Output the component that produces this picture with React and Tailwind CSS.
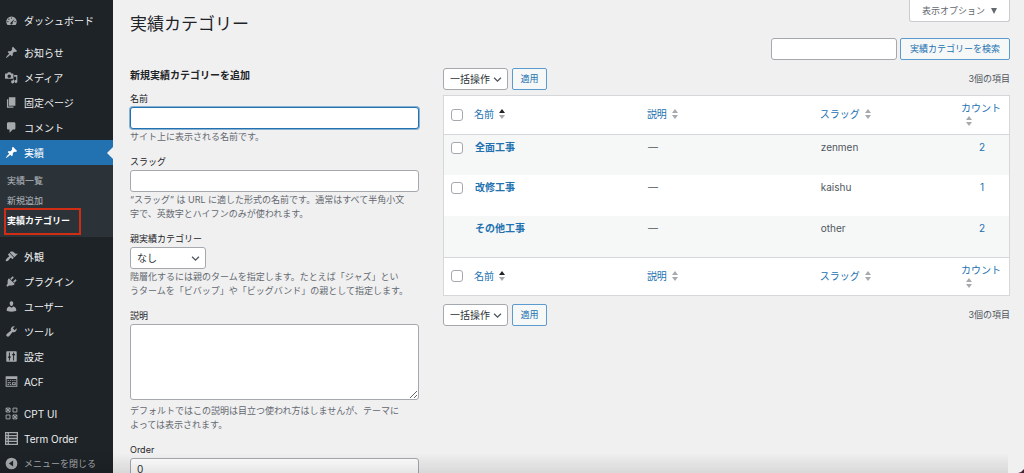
import React, { useState } from "react";

const icons = {
  dashboard: (
    <path
      fillRule="evenodd"
      d="M3.8 17h12.4c1.1-1.4 1.8-3.2 1.8-5.100a8 8 0 0 0-16 0c0 1.900.7 3.700 1.800 5.100zM10 5.200a1 1 0 1 1 0 2 1 1 0 0 1 0-2zM6 6.900a1 1 0 1 1 0 2 1 1 0 0 1 0-2zm8.800.3-3.200 6.300a1.800 1.800 0 1 1-2-.900zM4.500 10.600a1 1 0 1 1 0 2 1 1 0 0 1 0-2zm11 0a1 1 0 1 1 0 2 1 1 0 0 1 0-2z"
    />
  ),
  pin: (
    <path d="M10.440 3.020l1.820-1.820 6.360 6.350-1.830 1.820c-1.050-.680-2.480-.570-3.410.360l-.750.750c-.920.930-1.040 2.350-.350 3.410l-1.830 1.820-2.410-2.410-2.800 2.790c-.420.420-3.380 2.710-3.800 2.290s1.860-3.390 2.280-3.810l2.790-2.790L4.100 9.360l1.830-1.820c1.050.690 2.480.570 3.400-.360l.750-.750c.930-.920 1.050-2.350.360-3.410z" />
  ),
  media: (
    <>
      <path
        fillRule="evenodd"
        d="M1 4h2.500L4.500 2h4l1 2H12c.600 0 1 .400 1 1v6c0 .600-.400 1-1 1H1c-.600 0-1-.400-1-1V5c0-.600.400-1 1-1zm5.500 1.300a2.700 2.700 0 1 0 0 5.400 2.700 2.700 0 0 0 0-5.400z"
      />
      <path d="M14 6h5v10.200a2.300 2.300 0 1 1-1.800-2.200V9H14zM12.200 13.300V13H14v3.700a2.300 2.300 0 1 1-1.800-2.200z" />
    </>
  ),
  page: <path d="M6 15V2h10v13H6zm-1 1h8v2H3V5h2v11z" />,
  comment: (
    <path d="M5 2h9c1.100 0 2 .900 2 2v7c0 1.100-.900 2-2 2h-2l-5 5v-5H5c-1.100 0-2-.900-2-2V4c0-1.100.900-2 2-2z" />
  ),
  appearance: (
    <path d="M14.480 11.060L7.410 3.990l1.500-1.500c.500-.560 2.300-.470 3.510.320 1.210.800 1.430 1.280 2.910 2.100 1.180.640 2.450 1.260 4.450.850zm-.710.710L6.700 4.700 4.930 6.470c-.390.390-.390 1.020 0 1.410l1.060 1.060c.390.390.390 1.030 0 1.420-.600.600-1.430 1.110-2.210 1.690-.350.260-.700.530-1.010.840C1.430 14.230.400 16.080 1.400 17.070c.990 1 2.840-.030 4.180-1.360.310-.310.580-.660.850-1.020.570-.780 1.080-1.610 1.690-2.210.390-.390 1.020-.390 1.410 0l1.060 1.060c.390.390 1.020.390 1.410 0z" />
  ),
  plugin: (
    <path d="M13.110 4.360L9.870 7.600 8 5.730l3.240-3.240c.350-.340 1.050-.200 1.560.320.520.510.660 1.210.310 1.550zm-8 1.770l.910-1.120 9.010 9.010-1.190.840c-.710.710-2.630 1.160-3.820 1.160H6.140L4.900 17.260c-.590.590-1.540.590-2.120 0-.590-.580-.590-1.530 0-2.120l1.240-1.240v-3.880c0-1.130.400-3.190 1.090-3.890zm7.260 3.970l3.240-3.240c.340-.350 1.040-.210 1.550.310.520.510.660 1.210.310 1.550l-3.240 3.250z" />
  ),
  users: (
    <path d="M10 9.250c-2.270 0-2.730-3.440-2.730-3.440C7 4.020 7.820 2 9.970 2c2.160 0 2.980 2.020 2.710 3.810 0 0-.410 3.440-2.680 3.440zm0 2.570L12.720 10c2.390 0 4.520 2.330 4.520 4.530v2.490s-3.650 1.130-7.240 1.130c-3.650 0-7.240-1.130-7.240-1.130v-2.490c0-2.250 1.940-4.480 4.470-4.480z" />
  ),
  tools: (
    <path d="M16.680 9.770c-1.340 1.340-3.300 1.670-4.950.990l-5.410 6.520c-.990.990-2.590.990-3.580 0s-.990-2.590 0-3.570l6.520-5.420c-.680-1.650-.350-3.610.990-4.950 1.280-1.280 3.120-1.620 4.720-1.060l-2.890 2.890 2.820 2.820 2.860-2.870c.530 1.580.180 3.390-1.080 4.650z" />
  ),
  settings: (
    <path
      fillRule="evenodd"
      d="M3 2h14c.600 0 1 .400 1 1v14c0 .600-.400 1-1 1H3c-.600 0-1-.400-1-1V3c0-.600.400-1 1-1zm3 2v6H4.500v2H6v4h1.500v-4H9v-2H7.500V4zm6.500 0v2H11v2h1.500v8H14V8h1.500V6H14V4z"
    />
  ),
  acf: (
    <path
      fillRule="evenodd"
      d="M1 2h18v16H1zm1.500 4v10.500h15V6zM4 7.500h2v1.500H4zm3.500 0h2v1.500h-2zm3.500 0h2v1.500h-2zm3.500 0h2v1.500h-2zM4 11h5v1.500H4zm7 0h5.500v4.500H11zM4 14h2v1.500H4zm3.500 0h2v1.500h-2zm5-1.700v2H15v-2z"
    />
  ),
  cpt: (
    <g fill="none" stroke="currentColor" strokeWidth="1.400">
      <path d="M1.700 1.700h6v6h-6zM12.300 1.700h6v6h-6zM1.700 12.300h6v6h-6zM12.300 12.300h6v6h-6z" />
      <path d="M1.700 1.700l6 6M7.700 1.700l-6 6M12.300 12.300l6 6M18.300 12.300l-6 6" />
    </g>
  ),
  order: (
    <g fill="none" stroke="currentColor" strokeWidth="2">
      <path d="M1 1h18v18H1zM1 5.500h18M1 10h18M1 14.500h18M5 1v18" />
    </g>
  ),
  collapse: (
    <path
      fillRule="evenodd"
      d="M10 1a9 9 0 1 1 0 18 9 9 0 0 1 0-18zM12.500 5.500L6 10l6.500 4.500z"
    />
  ),
};

const menuGroups = [
  [{ label: "ダッシュボード", icon: "dashboard" }],
  [
    { label: "お知らせ", icon: "pin" },
    { label: "メディア", icon: "media" },
    { label: "固定ページ", icon: "page" },
    { label: "コメント", icon: "comment" },
    {
      label: "実績",
      icon: "pin",
      current: true,
      children: ["実績一覧", "新規追加", "実績カテゴリー"],
    },
  ],
  [
    { label: "外観", icon: "appearance" },
    { label: "プラグイン", icon: "plugin" },
    { label: "ユーザー", icon: "users" },
    { label: "ツール", icon: "tools" },
    { label: "設定", icon: "settings" },
    { label: "ACF", icon: "acf" },
  ],
  [
    { label: "CPT UI", icon: "cpt" },
    { label: "Term Order", icon: "order" },
  ],
];

const terms = [
  { name: "全面工事", slug: "zenmen", count: 2, selectable: true },
  { name: "改修工事", slug: "kaishu", count: 1, selectable: true },
  { name: "その他工事", slug: "other", count: 2, selectable: false },
];

const inputClass =
  "block h-[22px] w-full rounded-[3px] border border-[#a5a8ad] bg-white px-[6px] text-[10px] text-[#2c3338] outline-none focus:border-[#2271b1] focus:ring-1 focus:ring-[#2271b1]/50";

const buttonClass =
  "h-[22px] rounded-[2px] border border-[#5b9bd0] bg-[#f6f7f7] text-[9px] text-[#2271b1]";

const checkboxClass =
  "block size-3 appearance-none rounded-[3px] border border-[#a5a8ad] bg-white checked:bg-[#2271b1]";

const MenuIcon = ({ name }) => (
  <svg viewBox="0 0 20 20" className="size-[13px] shrink-0" fill="currentColor" aria-hidden="true">
    {icons[name]}
  </svg>
);

const MenuItem = ({ item }) => (
  <li>
    <a
      href="#"
      className={
        item.current
          ? "relative flex h-[25px] items-center gap-[6px] bg-[#2271b1] pl-[5px] text-white"
          : "flex h-[25px] items-center gap-[6px] pl-[5px] text-[#f0f0f1]"
      }
    >
      <span className={item.current ? "text-white" : "text-[#a7aaad]"}>
        <MenuIcon name={item.icon} />
      </span>
      {item.label}
      {item.current && (
        <span className="absolute top-1/2 right-0 size-0 -translate-y-1/2 border-y-[6px] border-r-[6px] border-y-transparent border-r-[#f0f0f1]" />
      )}
    </a>
    {item.children && (
      <ul className="bg-[#2c3338] py-[6px] text-[9px]">
        {item.children.map((child, index) => {
          const active = index === item.children.length - 1;
          return (
            <li key={child} className="relative">
              <a
                href="#"
                className={
                  active
                    ? "flex h-5 items-center pl-[7px] font-bold text-white"
                    : "flex h-5 items-center pl-[7px] text-[#b4b9be]"
                }
              >
                {child}
              </a>
              {active && (
                <span className="pointer-events-none absolute -top-[3px] left-1 h-[27px] w-[77px] border-2 border-[#d12d14]" />
              )}
            </li>
          );
        })}
      </ul>
    )}
  </li>
);

const Sidebar = () => (
  <nav className="w-[113px] shrink-0 bg-[#1d2327] pt-2 text-[10px] whitespace-nowrap">
    {menuGroups.map((group, index) => (
      <ul key={index} className="mb-[7px] last-of-type:mb-0">
        {group.map((item) => (
          <MenuItem key={item.label} item={item} />
        ))}
      </ul>
    ))}
    <button
      type="button"
      className="flex h-[25px] w-full items-center gap-[6px] pl-[5px] text-[9px] text-[#a7aaad]"
    >
      <MenuIcon name="collapse" />
      メニューを閉じる
    </button>
  </nav>
);

const Chevron = () => (
  <svg
    viewBox="0 0 10 10"
    className="pointer-events-none absolute top-[7px] right-[6px] size-[9px] text-[#50575e]"
    fill="none"
    stroke="currentColor"
    strokeWidth="1.500"
    aria-hidden="true"
  >
    <path d="M1.200 3L5 6.800 8.800 3" />
  </svg>
);

const SortArrows = ({ sorted }) => (
  <svg viewBox="0 0 6 12" className="ml-[5px] h-3 w-[6px]" aria-hidden="true">
    <path d="M3 1l3 4H0z" fill={sorted ? "#1d2327" : "#a7aaad"} />
    <path d="M3 11l3-4H0z" fill="#a7aaad" />
  </svg>
);

const Field = ({ id, label, help, children }) => (
  <div className="mb-[11px]">
    <label htmlFor={id} className="mb-px block w-fit text-[#1d2327]">
      {label}
    </label>
    {children}
    {help && <p className="mt-px whitespace-pre-line text-[#646970]">{help}</p>}
  </div>
);

const AddTermForm = () => (
  <form className="text-[9px] leading-[14px]" onSubmit={(e) => e.preventDefault()}>
    <h2 className="mb-[10px] text-[10px] font-bold text-[#1d2327]">新規実績カテゴリーを追加</h2>
    <Field id="tag-name" label="名前" help="サイト上に表示される名前です。">
      <input id="tag-name" type="text" autoFocus className={`${inputClass} caret-transparent`} />
    </Field>
    <Field
      id="tag-slug"
      label="スラッグ"
      help={
        "“スラッグ” は URL に適した形式の名前です。通常はすべて半角小文\n字で、英数字とハイフンのみが使われます。"
      }
    >
      <input id="tag-slug" type="text" className={inputClass} />
    </Field>
    <Field
      id="parent"
      label="親実績カテゴリー"
      help={
        "階層化するには親のタームを指定します。たとえば「ジャズ」とい\nうタームを「ビバップ」や「ビッグバンド」の親として指定します。"
      }
    >
      <div className="relative w-[76px]">
        <select id="parent" className={`${inputClass} appearance-none`}>
          <option>なし</option>
        </select>
        <Chevron />
      </div>
    </Field>
    <Field id="tag-description" label="説明">
      <textarea
        id="tag-description"
        className="block h-[76px] w-full rounded-[3px] border border-[#a5a8ad] bg-white outline-none"
      />
      <p className="mt-1 whitespace-pre-line text-[#646970]">
        {"デフォルトではこの説明は目立つ使われ方はしませんが、テーマに\nよっては表示されます。"}
      </p>
    </Field>
    <Field id="tag-order" label="Order">
      <input id="tag-order" type="text" defaultValue="0" className={inputClass} />
    </Field>
  </form>
);

const BulkActions = () => (
  <div className="flex items-center gap-1">
    <div className="relative w-[65px]">
      <select aria-label="一括操作を選択" className={`${inputClass} appearance-none`}>
        <option>一括操作</option>
      </select>
      <Chevron />
    </div>
    <button type="button" className={`${buttonClass} w-[35px]`}>
      適用
    </button>
    <span className="ml-auto text-[9px] text-[#50575e]">3個の項目</span>
  </div>
);

const HeadRow = ({ checked, onToggle }) => (
  <tr className="h-[38px]">
    <td className="pl-[7px]">
      <input
        type="checkbox"
        aria-label="すべて選択"
        className={checkboxClass}
        checked={checked}
        onChange={onToggle}
      />
    </td>
    {["名前", "説明", "スラッグ", "カウント"].map((title) => (
      <th key={title} scope="col" className="pb-px pl-[6px] text-left font-normal">
        <a href="#" className="flex flex-wrap items-center text-[#2271b1]">
          {title}
          <SortArrows sorted={title === "名前"} />
        </a>
      </th>
    ))}
  </tr>
);

const TermsTable = () => {
  const [selected, setSelected] = useState([]);
  const selectable = terms.filter((term) => term.selectable);
  const allSelected = selected.length === selectable.length;

  const toggle = (slug) => {
    setSelected(
      selected.includes(slug) ? selected.filter((s) => s !== slug) : [...selected, slug]
    );
  };

  const toggleAll = () => {
    setSelected(allSelected ? [] : selectable.map((term) => term.slug));
  };

  return (
    <div className="mt-[5px] mb-2 border border-[#d5d7da] bg-white">
      <table className="w-full table-fixed border-collapse text-[10px] leading-[14px]">
        <colgroup>
          <col className="w-6" />
          <col />
          <col />
          <col className="w-1/4" />
          <col className="w-[54px]" />
        </colgroup>
        <thead className="border-b border-[#d5d7da]">
          <HeadRow checked={allSelected} onToggle={toggleAll} />
        </thead>
        <tbody>
          {terms.map((term) => (
            <tr key={term.slug} className="h-[41px] align-top text-[#50575e] odd:bg-[#f6f7f7]">
              <td className="pt-[7px] pl-[7px]">
                {term.selectable && (
                  <input
                    type="checkbox"
                    aria-label={`${term.name}を選択`}
                    className={checkboxClass}
                    checked={selected.includes(term.slug)}
                    onChange={() => toggle(term.slug)}
                  />
                )}
              </td>
              <td className="pt-[5px] pl-[7px]">
                <a href="#" className="font-bold text-[#2271b1]">
                  {term.name}
                </a>
              </td>
              <td className="pt-[5px] pl-[7px]">—</td>
              <td className="pt-[5px] pl-[7px]">{term.slug}</td>
              <td className="pt-[5px] text-center">
                <a href="#" className="text-[#2271b1]">
                  {term.count}
                </a>
              </td>
            </tr>
          ))}
        </tbody>
        <tfoot className="border-t border-[#d5d7da]">
          <HeadRow checked={allSelected} onToggle={toggleAll} />
        </tfoot>
      </table>
    </div>
  );
};

export default function App() {
  return (
    <div
      lang="ja"
      className="flex h-screen overflow-hidden bg-[#f0f0f1] font-[Inter,'Noto_Sans_CJK_JP',sans-serif] text-[10px] leading-[14px] text-[#3c434a]"
    >
      <Sidebar />
      <main className="min-w-0 flex-1 pr-[14px] pl-[17px]">
        <header className="flex items-start justify-between pb-[2px]">
          <h1 className="pt-3 text-[17px] leading-6 text-[#1d2327]">実績カテゴリー</h1>
          <button
            type="button"
            className="flex h-[22px] items-center gap-[6px] rounded-b-[3px] border border-t-0 border-[#c9cbce] bg-white px-3 text-[9px] text-[#646970]"
          >
            表示オプション
            <svg viewBox="0 0 6 6" className="size-[6px]" fill="currentColor" aria-hidden="true">
              <path d="M0 0h6L3 6z" />
            </svg>
          </button>
        </header>
        <form className="flex justify-end gap-[3px]" onSubmit={(e) => e.preventDefault()}>
          <div className="w-[126px]">
            <input type="search" aria-label="実績カテゴリーを検索" className={inputClass} />
          </div>
          <button type="submit" className={`${buttonClass} w-[110px]`}>
            実績カテゴリーを検索
          </button>
        </form>
        <div className="mt-2 flex">
          <section className="w-[35%] pr-[19px]">
            <AddTermForm />
          </section>
          <section className="w-[65%] pl-[5px]">
            <BulkActions />
            <TermsTable />
            <BulkActions />
          </section>
        </div>
      </main>
      <div className="pointer-events-none fixed right-4 bottom-0 left-0 h-5 bg-linear-to-b from-transparent to-black/10" />
      {/* rounded window corner */}
      <svg
        viewBox="0 0 6 4"
        className="pointer-events-none fixed right-0 bottom-0 h-1 w-[6px]"
        aria-hidden="true"
      >
        <path d="M0 4Q4 3 6 0V4z" fill="#4a1f38" />
      </svg>
    </div>
  );
}
